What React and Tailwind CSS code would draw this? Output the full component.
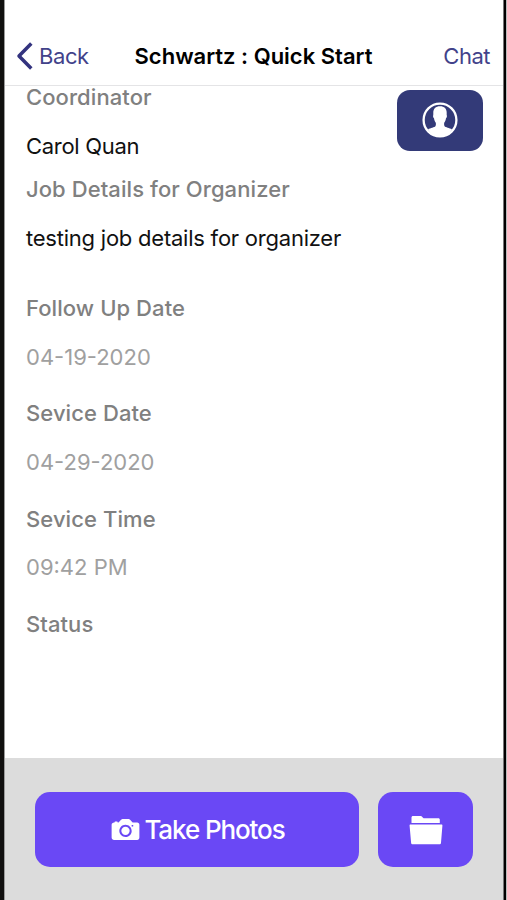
import { IoIosCamera } from "react-icons/io";

const fields = [
  { label: "Follow Up Date", value: "04-19-2020" },
  { label: "Sevice Date", value: "04-29-2020" },
  { label: "Sevice Time", value: "09:42 PM" },
  { label: "Status", value: "" },
];

function ContactIcon() {
  return (
    <svg width="36" height="36" viewBox="0 0 36 36" fill="currentColor">
      <circle cx="18" cy="18" r="16.4" fill="none" stroke="currentColor" strokeWidth="2.3" />
      <path d="M18 4.200c4.300 0 6.900 2.700 6.700 6.600 0 1.200-.1 1.900.1 2.400.4.900-.1 2.500-.8 3.100-.3 2-1.100 3.500-1.800 4.500-.2 1.400-.1 2.600.4 3.400.9 1.200 4.800 1.600 7.400 3.100C27.500 31.500 23 34.500 18 34.500S8.500 31.500 6 27.300c2.600-1.500 6.500-1.900 7.400-3.100.5-.8.6-2 .4-3.400-.7-1-1.500-2.500-1.800-4.500-.7-.6-1.200-2.200-.8-3.100.2-.5.1-1.200.1-2.400-.2-3.900 2.400-6.600 6.700-6.600z" />
    </svg>
  );
}

function FolderIcon() {
  return (
    <svg width="34" height="30" viewBox="0 0 34 30" fill="currentColor">
      <path d="M2.500 8V2.600C2.500 1.600 3.100 1 4 1h7.600c.8 0 1.200.3 1.700.9l.7.800c.4.4.8.5 1.300.5h14c1 0 1.500.6 1.500 1.500V8z" />
      <path d="M1.500 9.600h31c.7 0 1 .4.900 1.100L32 27.700c-.1 1-.7 1.500-1.600 1.500H3.700c-.9 0-1.500-.5-1.600-1.500L.6 10.700c-.1-.7.2-1.100.9-1.100z" />
    </svg>
  );
}

function Header() {
  return (
    <header className="grid h-[86px] grid-cols-[1fr_auto_1fr] items-end border-b border-[#e4e4e6] pl-[12px] pr-[13px] pb-[12px] text-[22px] leading-[34px] text-[#42428a]">
      <button className="-ml-px flex items-center gap-[6px]">
        <svg width="17" height="30" viewBox="0 0 17 30" fill="none" stroke="#33337f" strokeWidth="3.5" strokeLinejoin="round">
          <path d="M15.3 2.5 3 15l12.3 12.5" />
        </svg>
        <span className="tracking-[-0.4px]">Back</span>
      </button>
      <h1 className="font-semibold text-black [font-feature-settings:'calt'_0]">Schwartz : Quick Start</h1>
      <button className="justify-self-end tracking-[-0.5px]">Chat</button>
    </header>
  );
}

function Label({ children }) {
  return <div className="h-[30px] text-[22px] font-medium leading-[30px] tracking-[0.08px] text-[#808080]">{children}</div>;
}

export default function App() {
  return (
    <div className="flex h-[900px] w-[507px] overflow-hidden bg-white font-['Inter','Liberation_Sans',sans-serif]">
      <div className="w-[5px] shrink-0 border-r border-[#9a9a9a] bg-[#11100f]" />
      <div className="flex min-w-0 flex-1 flex-col">
        <Header />
        <main className="flex-1 pl-[21px] pr-[20px]">
          <div className="flex justify-between">
            <div className="-mt-[4px]">
              <Label>Coordinator</Label>
              <div className="mt-[19px] text-[22px] leading-[30px] text-[#111] tracking-[-0.3px]">Carol Quan</div>
            </div>
            <button className="mt-[4px] flex h-[61px] w-[86px] items-center justify-center rounded-[13px] bg-[#333a78] pb-[1px] text-white">
              <ContactIcon />
            </button>
          </div>
          <div className="mt-[13px]">
            <Label>Job Details for Organizer</Label>
            <div className="mt-[19px] text-[22px] leading-[30px] text-[#111] tracking-[-0.23px]">testing job details for organizer</div>
          </div>
          <div className="mt-[40px] flex flex-col gap-[26.7px]">
            {fields.map((f) => (
              <div key={f.label}>
                <Label>{f.label}</Label>
                <div className="mt-[18.7px] text-[22px] leading-[30px] text-[#a0a0a0]">{f.value}</div>
              </div>
            ))}
          </div>
        </main>
        <footer className="flex h-[142px] gap-[19px] bg-[#dcdcdc] pl-[30px] pt-[34px]">
          <button className="flex h-[75px] w-[324px] shrink-0 items-center justify-center rounded-[15px] bg-[#6a48f5] pr-[2px] text-[26px] font-medium text-white">
            <IoIosCamera size={37} />
            <span className="tracking-[-1.1px]">Take Photos</span>
          </button>
          <button className="flex h-[75px] w-[95px] shrink-0 items-center justify-center rounded-[15px] bg-[#6a48f5] text-white">
            <FolderIcon />
          </button>
        </footer>
      </div>
      <div className="w-[4px] shrink-0 border-l border-r border-l-[#777] border-r-[#bbb] bg-black" />
    </div>
  );
}
